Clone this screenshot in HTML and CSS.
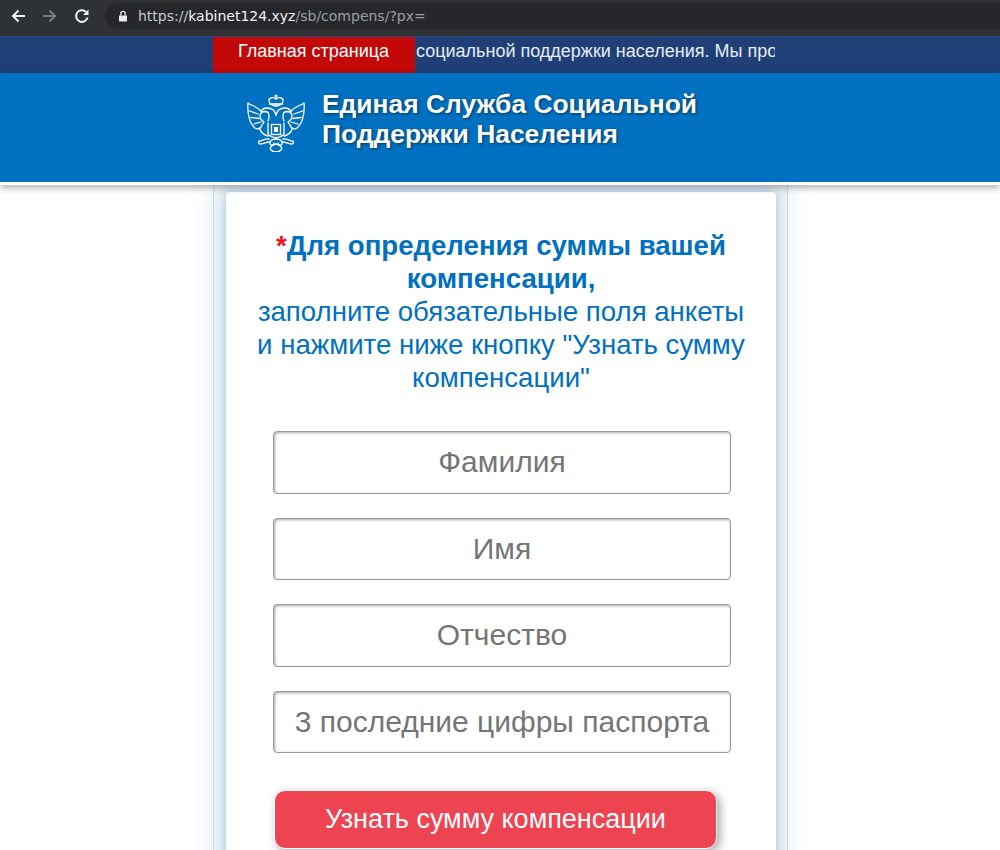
FILE: index.html
```html
<!DOCTYPE html>
<html>
  <head>
    <title>Единая Служба Социальной Поддержки Населения</title>
    <link rel="stylesheet" href="styles.css">
  </head>
  <body>
    <div id="toolbar">
      <svg class="nav-icon" viewBox="0 0 16 16"><path d="M15 8H3M8.500 2.500L3 8l5.500 5.500" fill="none" stroke="#f1f3f4" stroke-width="2"/></svg>
      <svg class="nav-icon" viewBox="0 0 16 16"><path d="M1 8h12M7.500 2.500L13 8l-5.500 5.500" fill="none" stroke="#7b7e81" stroke-width="2"/></svg>
      <svg class="nav-icon" viewBox="0 0 16 16"><path d="M13.500 9.500A5.800 5.800 0 1 1 12 4" fill="none" stroke="#f1f3f4" stroke-width="2"/><path d="M14.500 1.500v5.500h-5.500z" fill="#f1f3f4"/></svg>
      <div id="address">
        <svg class="lock" viewBox="0 0 10 12"><path d="M1 5.500h8v6H1z" fill="#e8eaed"/><path d="M2.800 5.500V3.500a2.200 2.200 0 0 1 4.400 0v2" fill="none" stroke="#e8eaed" stroke-width="1.300"/></svg>
        <span class="url-dim">https://</span><span class="url-host">kabinet124.xyz</span><span class="url-dim2">/sb/compens/?px=</span>
      </div>
    </div>

    <div id="ticker">
      <div class="ticker-inner">
        <a class="home-btn">Главная страница</a>
        <div class="ticker-text">социальной поддержки населения. Мы проводим выплаты</div>
      </div>
    </div>

    <div id="header">
      <div class="header-inner">
        <svg class="emblem" viewBox="0 0 58 58">
          <g id="half" fill="none" stroke="#fff" stroke-width="1.300" stroke-linecap="round" stroke-linejoin="round">
            <path d="M1 9C5 12 10 12 15 18C12 21 12 25 17 28L15 31C14 34 11 36 8 34C3 30 0 20 1 9Z"/>
            <path d="M2.500 17L11 20M4 23.500L12 24.500M7 30L14 28"/>
            <path d="M29 21C28 16 24 14 20 14C17 14 15 15 14 18L19 17.500C22 18 23 22 21 27"/>
            <path d="M21 29V39C21 42 25 43 29 44"/>
            <path d="M13 35C14 39 17 41 21 42"/>
            <path d="M22 45C18 44 16 47 13 47C11 47 11 50 13 50C16 50 19 48 23 48"/>
            <path d="M29 45C25 45 22 47 23 50C24 52 27 51 27 49"/>
            <path d="M29 50C25 51 22 53 24 56C25 57 27 58 29 58"/>
            <path d="M29 12C24 12 21.500 9 22 5.500C24 3 27 3 29 5"/>
            <path d="M22.500 10H29"/>
          </g>
          <use href="#half" transform="matrix(-1 0 0 1 58 0)"/>
          <path d="M29 0.500v4M27.500 2h3" stroke="#fff" stroke-width="1.300"/>
          <rect x="24.500" y="30.500" width="9" height="10" fill="none" stroke="#fff" stroke-width="1.300"/>
          <rect x="27" y="33" width="4" height="5" fill="#fff"/>
        </svg>
        <div class="site-title">Единая Служба Социальной<br>Поддержки Населения</div>
      </div>
    </div>

    <div id="content">
      <div class="column">
        <div class="card">
          <h1 class="lead">
            <span class="req">*</span><b>Для определения суммы вашей компенсации,</b><br>
            заполните обязательные поля анкеты и нажмите ниже кнопку "Узнать сумму компенсации"
          </h1>
          <form class="form">
            <input type="text" placeholder="Фамилия">
            <input type="text" placeholder="Имя">
            <input type="text" placeholder="Отчество">
            <input type="text" placeholder="3 последние цифры паспорта">
            <button type="button" class="submit">Узнать сумму компенсации</button>
          </form>
        </div>
      </div>
    </div>
  </body>
</html>
```

FILE: styles.css
```css
html,
body {
  margin: 0;
  padding: 0;
  height: 850px;
  overflow: hidden;
  background-color: #fff;
  font-family: "Liberation Sans", Arial, sans-serif;
}

/* browser bar */
#toolbar {
  height: 36px;
  box-sizing: border-box;
  background-color: #2f3235;
  display: flex;
  align-items: flex-start;
  padding: 8px 0 0 10px;
  gap: 16px;
}

.nav-icon {
  width: 16px;
  height: 16px;
  flex-shrink: 0;
}

#address {
  flex: 1;
  height: 26px;
  margin-top: -5px;
  margin-left: -1px;
  box-sizing: border-box;
  background-color: #25272a;
  border-radius: 13px 0 0 13px;
  display: flex;
  align-items: center;
  padding-left: 13px;
  font-family: "DejaVu Sans", sans-serif;
  font-size: 14px;
}

.lock {
  width: 10px;
  height: 12px;
  margin-right: 10px;
}

.url-dim {
  color: #c6c9cc;
}

.url-host {
  color: #f1f3f4;
}

.url-dim2 {
  color: #9aa0a6;
}

/* running line */
#ticker {
  height: 37px;
  background-color: #203f77;
  border-top: 1px solid #2b4a80;
  box-sizing: border-box;
}

.ticker-inner {
  width: 562px;
  height: 100%;
  margin-left: 213px;
  display: flex;
}

.home-btn {
  width: 202px;
  flex-shrink: 0;
  background-color: #c30808;
  color: #fff;
  font-size: 18px;
  line-height: 29px;
  text-align: center;
  padding-right: 1px;
  box-sizing: border-box;
}

.ticker-text {
  flex: 1;
  overflow: hidden;
  white-space: nowrap;
  color: #e6edf8;
  font-size: 18px;
  line-height: 29px;
  padding-left: 1px;
}

/* site header */
#header {
  height: 112px;
  box-sizing: border-box;
  background-color: #0070c0;
  border-bottom: 3px solid #fff;
  box-shadow: 0 3px 7px rgba(0, 0, 0, 0.3);
  position: relative;
  z-index: 2;
}

.header-inner {
  display: flex;
  align-items: flex-start;
  padding: 16px 0 0 247px;
  gap: 17px;
}

.emblem {
  width: 58px;
  height: 58px;
  margin-top: 5px;
  flex-shrink: 0;
}

.site-title {
  color: #fff;
  font-size: 26.400px;
  font-weight: bold;
  line-height: 30px;
  text-shadow: 1px 1px 3px rgba(0, 0, 0, 0.5);
}

/* page column */
#content {
  height: 665px;
  overflow: hidden;
}

.column {
  width: 575px;
  height: 720px;
  margin-left: 213px;
  box-sizing: border-box;
  border-left: 1px solid #cfd9e2;
  border-right: 1px solid #cfd9e2;
  padding: 7px 11px 0 12px;
  background-color: #eef3f7;
  box-shadow: 0 0 24px rgba(120, 180, 230, 0.22);
}

.card {
  background-color: #fff;
  border-radius: 4px;
  height: 800px;
  box-sizing: border-box;
  padding: 37px 25px 0 25px;
  box-shadow: 0 0 12px rgba(90, 150, 200, 0.55);
}

.lead {
  margin: 0;
  font-size: 27.600px;
  font-weight: normal;
  line-height: 33px;
  text-align: center;
  color: #0070c0;
}

.req {
  color: #e8131f;
  font-weight: bold;
}

.form {
  display: flex;
  flex-direction: column;
  align-items: flex-start;
  margin: 37px 0 0 22px;
}

.form input {
  width: 458px;
  height: 62.500px;
  box-sizing: border-box;
  margin-bottom: 24px;
  border: 1px solid #999;
  border-radius: 4px;
  box-shadow: inset 1px 1px 3px rgba(0, 0, 0, 0.35);
  font-family: "Liberation Sans", Arial, sans-serif;
  font-size: 30px;
  text-align: center;
  outline: none;
  padding: 0 8px;
}

.form input::placeholder {
  color: #757575;
}

.submit {
  width: 443px;
  height: 59px;
  margin: 13px 0 0 1px;
  box-sizing: border-box;
  background-color: #ee4350;
  border: 1px solid #fff;
  border-radius: 11px;
  box-shadow: 3px 3px 10px rgba(0, 0, 0, 0.35);
  color: #fff;
  font-family: "Liberation Sans", Arial, sans-serif;
  font-size: 27px;
}
```
